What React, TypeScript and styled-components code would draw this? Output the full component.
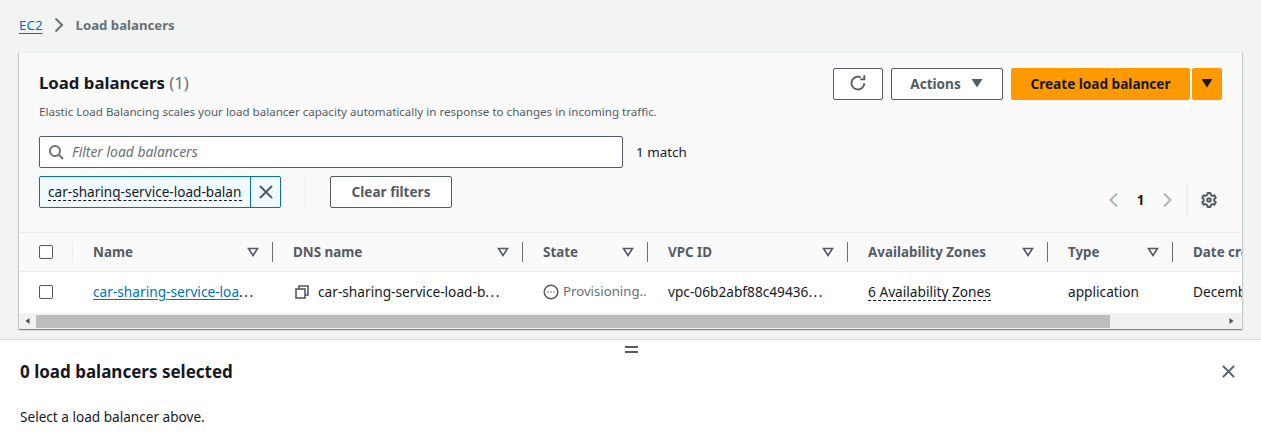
import React from "react";
import styled, { createGlobalStyle } from "styled-components";

const Global = createGlobalStyle`
  html, body { margin: 0; padding: 0; }
  body { background: #f2f3f3; font-family: "Noto Sans", "Open Sans", sans-serif; color: #16191f; font-size: 13px; }
  * { box-sizing: border-box; }
`;
const Page = styled.div`width: 1261px; height: 441px; overflow: hidden; display: flex; flex-direction: column;`;
const Main = styled.div`height: 339px; padding: 0 19px 0 19px; flex: none;`;
const Crumbs = styled.nav`height: 52px; display: flex; align-items: center; font-size: 13.4px; padding-bottom: 3px;`;
const CrumbLink = styled.a`color: #0073bb; text-decoration: underline; text-underline-offset: 3px;`;
const CrumbSep = styled.svg`width: 16px; height: 16px; margin: 0 9px 0 8px; fill: none; stroke: #687078; stroke-width: 2;`;
const CrumbCurrent = styled.span`color: #687078; font-weight: 700; font-size: 13.2px;`;
const Card = styled.section`width: 1223px; height: 277px; background: #fff; box-shadow: 0 1px 1px 0 rgba(0,28,36,.3), 1px 1px 1px 0 rgba(0,28,36,.15), -1px 1px 1px 0 rgba(0,28,36,.15); border-top: 1px solid #eaeded; display: flex; flex-direction: column;`;
const CardHeader = styled.header`height: 180px; background: #fafafa; padding: 15px 20px 0; border-bottom: 1px solid #eaeded; flex: none; display: flex; flex-direction: column;`;
const TopRow = styled.div`display: flex; justify-content: space-between; height: 32px;`;
const TitleBlock = styled.div`display: flex; flex-direction: column;`;
const Title = styled.h1`margin: 0; font-size: 16.75px; line-height: 30px; font-weight: 700; color: #16191f;`;
const Count = styled.span`font-weight: 400; color: #687078;`;
const Description = styled.p`margin: 0; padding-top: 6px; font-size: 11.58px; line-height: 16px; color: #545b64; white-space: nowrap;`;
const Actions = styled.div`display: flex; gap: 8px;`;
const Button = styled.button<{ $w: number }>`width: ${p => p.$w}px; height: 32px; padding: 0 0 2px; display: flex; align-items: center; justify-content: center; gap: 9px; background: #fff; border: 1px solid #545b64; border-radius: 2px; color: #545b64; font: 700 13.6px "Noto Sans", sans-serif;`;
const SplitGroup = styled.div`display: flex; gap: 2px;`;
const Primary = styled(Button)`background: #ff9900; border: none; color: #16191f;`;
const FilterRow = styled.div`display: flex; align-items: center; margin-top: 36px;`;
const FilterBox = styled.div`width: 584px; height: 32px; background: #fff; border: 1px solid #545b64; border-radius: 2px; display: flex; align-items: center; padding-left: 8px; gap: 8px;`;
const Placeholder = styled.span`font-style: italic; color: #687078; font-size: 13.9px; margin-top: -2px;`;
const Match = styled.span`margin-left: 13px; font-size: 13.4px; color: #16191f;`;
const TokenRow = styled.div`display: flex; align-items: center; margin-top: 8px; height: 32px;`;
const Token = styled.div`width: 242px; height: 32px; display: flex; background: #f1faff; border: 1px solid #0073bb; border-radius: 2px;`;
const TokenLabel = styled.span`width: 211px; padding-left: 8px; display: flex; align-items: center; border-right: 1px solid #0073bb; font-size: 13.6px; overflow: hidden;`;
const TokenText = styled.span`white-space: nowrap; overflow: hidden; width: 194px; line-height: 17px; border-bottom: 1px dashed #16191f;`;
const TokenClose = styled.span`flex: 1; display: flex; align-items: center; justify-content: center; color: #545b64;`;
const VSep = styled.div`width: 1px; height: 32px; background: #eaeded; margin: 0 24px;`;
const Pager = styled.div`margin-left: auto; margin-top: 16px; margin-right: 5px; display: flex; align-items: center;`;
const PageNum = styled.span`width: 39px; text-align: center; font-size: 13.4px; font-weight: 700; color: #16191f;`;
const PagerSep = styled.div`width: 1px; height: 32px; background: #eaeded; margin: 0 13px 0 11px;`;
const TableArea = styled.div`flex: 1; overflow: hidden; background: #fff;`;
const Grid = styled.div`display: grid; grid-template-columns: 54px 200px 250px 125px 200px 200px 125px 200px; width: 1154px;`;
const Th = styled.div`height: 39px; background: #fafafa; border-bottom: 1px solid #eaeded; display: flex; align-items: center; padding-left: 20px; font-size: 13.4px; font-weight: 700; color: #545b64; position: relative; white-space: nowrap;`;
const Sort = styled.svg`position: absolute; right: 14px; top: 13px; width: 12px; height: 12px; fill: none; stroke: #545b64; stroke-width: 1.6;`;
const ThDivider = styled.span<{ $light?: boolean }>`position: absolute; right: 0; top: 9px; width: 1px; height: 20px; background: ${p => p.$light ? "#eaeded" : "#687078"};`;
const Td = styled.div`height: 40px; display: flex; align-items: center; padding-left: 20px; font-size: 13.7px; color: #16191f; white-space: nowrap; overflow: hidden;`;
const CellText = styled.span`display: inline-block; margin-top: -2px;`;
const Ellipsis = styled.span`letter-spacing: 1.5px;`;
const Check = styled.span`width: 14px; height: 14px; border: 1px solid #545b64; border-radius: 2px; background: #fff; flex: none;`;
const Link = styled.a`color: #0073bb; text-decoration: underline; text-underline-offset: 2px;`;
const Muted = styled.span`color: #687078; font-size: 13.2px; display: inline-block; margin-top: -2px;`;
const Dashed = styled.span`border-bottom: 1px dashed #16191f; line-height: 16px; padding-top: 1px; margin-top: -1px;`;
const IconGap = styled.span`display: inline-flex; margin: 0 9px 0 2px; color: #545b64;`;
const StatusIcon = styled.span`display: inline-flex; margin-right: 4px; color: #545b64;`;
const Scrollbar = styled.div`height: 16px; flex: none; background: #f1f1f1; display: flex; align-items: center; padding-right: 2px;`;
const ScrollArrow = styled.svg`width: 17px; height: 10px; fill: #505050; flex: none;`;
const Thumb = styled.div`width: 1074px; height: 13px; background: #bdbdbd; flex: none;`;
const Spacer = styled.div`flex: 1;`;
const Split = styled.section`flex: 1; background: #fff; border-top: 1px solid #d5dbdb; position: relative; padding: 20px 20px 0; display: flex; flex-direction: column;`;
const Handle = styled.span`position: absolute; left: 625px; top: 6px; width: 13px; height: 7px; border-top: 2px solid #545b64; border-bottom: 2px solid #545b64;`;
const SplitHead = styled.div`display: flex; justify-content: space-between; align-items: center; height: 22px;`;
const SplitTitle = styled.h2`margin: 0; font-size: 17px; font-weight: 700; color: #16191f;`;
const CloseWrap = styled.span`display: flex; color: #545b64; margin-right: 5px;`;
const SplitText = styled.p`margin: 25px 0 0; font-size: 13.6px; line-height: 20px; color: #16191f;`;

const X = ({ size = 16 }: { size?: number }) => (
  <svg width={size} height={size} viewBox="0 0 16 16" fill="none" stroke="currentColor" strokeWidth="2"><path d="M2 2l12 12M14 2L2 14" /></svg>
);
const Caret = ({ color }: { color: string }) => (
  <svg width="14" height="14" viewBox="0 0 14 14"><path d="M1.5 3h11L7 11.500z" fill={color} /></svg>
);
const SortIcon = () => <Sort viewBox="0 0 12 12"><path d="M1.500 2.500h9L6 9.500z" /></Sort>;

const cols = ["Name", "DNS name", "State", "VPC ID", "Availability Zones", "Type"];

export default function App() {
  return (
    <Page>
      <Global />
      <Main>
        <Crumbs>
          <CrumbLink>EC2</CrumbLink>
          <CrumbSep viewBox="0 0 16 16"><path d="M4.500 1.500l6.500 6.500-6.500 6.500" /></CrumbSep>
          <CrumbCurrent>Load balancers</CrumbCurrent>
        </Crumbs>
        <Card>
          <CardHeader>
            <TopRow>
              <TitleBlock>
                <Title>Load balancers <Count>(1)</Count></Title>
                <Description>Elastic Load Balancing scales your load balancer capacity automatically in response to changes in incoming traffic.</Description>
              </TitleBlock>
              <Actions>
                <Button $w={50} aria-label="Refresh">
                  <svg width="18" height="18" viewBox="0 0 16 16" fill="none" stroke="#545b64" strokeWidth="1.7"><path d="M13.6 8.2A5.700 5.700 0 1 1 10.500 3" /><path d="M13.600 1.200v3.600H10" /></svg>
                </Button>
                <Button $w={112}>Actions <Caret color="#545b64" /></Button>
                <SplitGroup>
                  <Primary $w={179}>Create load balancer</Primary>
                  <Primary $w={30} aria-label="More"><Caret color="#16191f" /></Primary>
                </SplitGroup>
              </Actions>
            </TopRow>
            <FilterRow>
              <FilterBox>
                <svg width="16" height="16" viewBox="0 0 16 16" fill="none" stroke="#687078" strokeWidth="2"><circle cx="7" cy="7" r="5" /><path d="M10.800 10.800L15 15" /></svg>
                <Placeholder>Filter load balancers</Placeholder>
              </FilterBox>
              <Match>1 match</Match>
            </FilterRow>
            <TokenRow>
              <Token>
                <TokenLabel><TokenText>car-sharing-service-load-balancer</TokenText></TokenLabel>
                <TokenClose><X /></TokenClose>
              </Token>
              <VSep />
              <Button $w={122}>Clear filters</Button>
              <Pager>
                <svg width="16" height="16" viewBox="0 0 16 16" fill="none" stroke="#aab7b8" strokeWidth="2"><path d="M12 1.500L5.500 8l6.500 6.500" /></svg>
                <PageNum>1</PageNum>
                <svg width="16" height="16" viewBox="0 0 16 16" fill="none" stroke="#aab7b8" strokeWidth="2"><path d="M4 1.500L10.500 8 4 14.500" /></svg>
                <PagerSep />
                <svg width="16" height="16" viewBox="0 0 16 16" fill="none" stroke="#545b64" strokeWidth="2" strokeLinejoin="round"><path d="M6.600 1h2.800l.4 2 1.700 1 1.900-.7 1.400 2.400-1.500 1.300v2l1.500 1.300-1.400 2.400-1.900-.7-1.700 1-.4 2H6.600l-.4-2-1.700-1-1.900.7-1.400-2.400L2.700 9V7L1.200 5.700l1.400-2.400 1.900.7 1.700-1z" /><circle cx="8" cy="8" r="1.800" /></svg>
              </Pager>
            </TokenRow>
          </CardHeader>
          <TableArea>
            <Grid>
              <Th><Check /><ThDivider $light /></Th>
              {cols.map(c => (
                <Th key={c}>{c}<SortIcon /><ThDivider /></Th>
              ))}
              <Th>Date created</Th>
              <Td><Check /></Td>
              <Td><CellText><Link>car-sharing-service-loa</Link><Ellipsis>...</Ellipsis></CellText></Td>
              <Td>
                <IconGap><svg width="14" height="14" viewBox="0 0 14 14" fill="none" stroke="currentColor" strokeWidth="1.6"><rect x="1" y="4" width="9" height="9" /><path d="M4 4V1h9v9h-3" /></svg></IconGap>
                <CellText>car-sharing-service-load-b<Ellipsis>...</Ellipsis></CellText>
              </Td>
              <Td>
                <StatusIcon><svg width="16" height="16" viewBox="0 0 16 16" fill="none" stroke="currentColor" strokeWidth="1.500"><circle cx="8" cy="8" r="6.800" /><path d="M4.500 8h1M7.500 8h1M10.500 8h1" /></svg></StatusIcon>
                <Muted>Provisioning..</Muted>
              </Td>
              <Td><CellText>vpc-06b2abf88c49436<Ellipsis>...</Ellipsis></CellText></Td>
              <Td><Dashed>6 Availability Zones</Dashed></Td>
              <Td><CellText>application</CellText></Td>
              <Td><CellText>December 5, 2023</CellText></Td>
            </Grid>
          </TableArea>
          <Scrollbar>
            <ScrollArrow viewBox="0 0 17 10"><path d="M10.500 2v6L6.500 5z" /></ScrollArrow>
            <Thumb />
            <Spacer />
            <ScrollArrow viewBox="0 0 17 10"><path d="M6.500 2v6l4-3z" /></ScrollArrow>
          </Scrollbar>
        </Card>
      </Main>
      <Split>
        <Handle />
        <SplitHead>
          <SplitTitle>0 load balancers selected</SplitTitle>
          <CloseWrap><X size={15} /></CloseWrap>
        </SplitHead>
        <SplitText>Select a load balancer above.</SplitText>
      </Split>
    </Page>
  );
}
